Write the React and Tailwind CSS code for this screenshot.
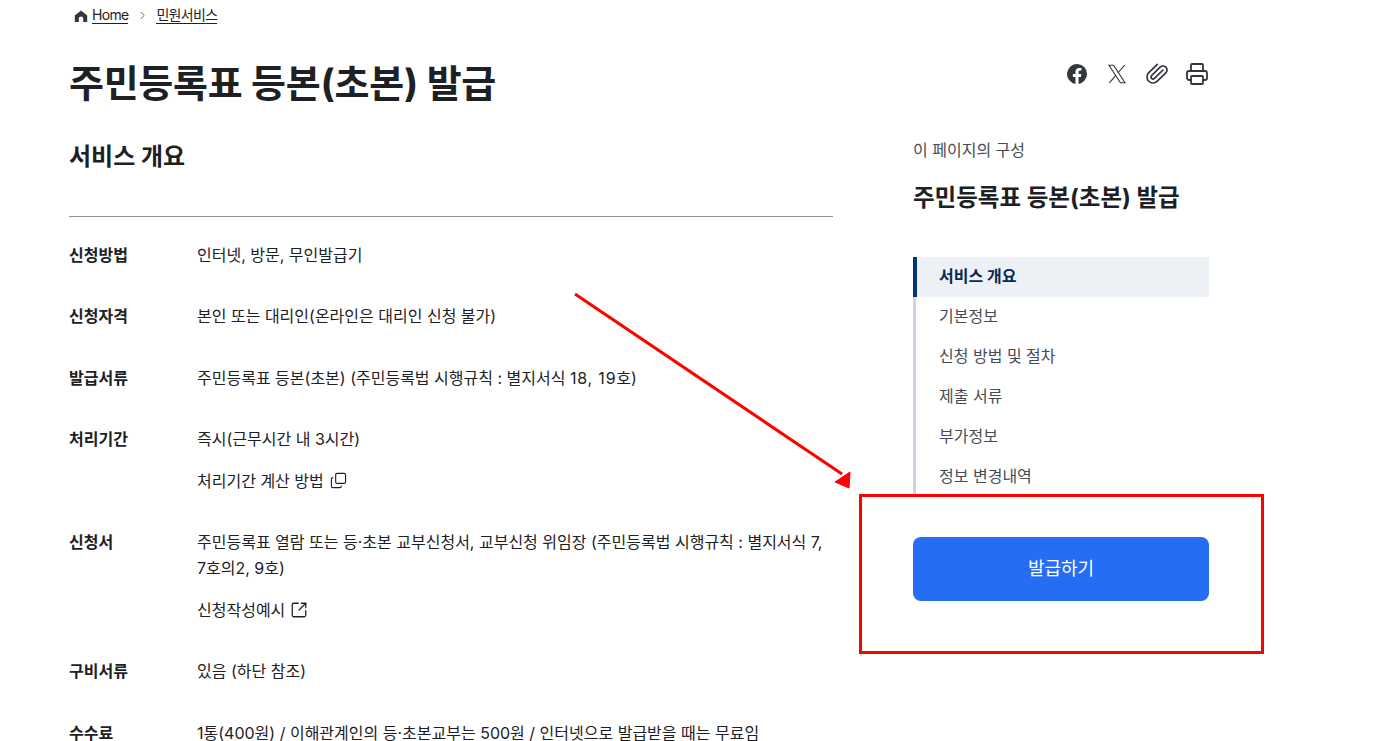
import { ChevronRight, Paperclip, Printer, Copy, SquareArrowOutUpRight } from 'lucide-react';

const FONT = "font-['Inter','Noto_Sans_CJK_KR',sans-serif]";

function Row({ label, children }) {
  return (
    <div className="flex">
      <div className="w-[128px] shrink-0 text-[16px] leading-[26px] font-bold text-[#1e2124]">{label}</div>
      <div className="min-w-0 flex-1 text-[16px] leading-[26px] text-[#1e2124]">{children}</div>
    </div>
  );
}

const navItems = ['기본정보', '신청 방법 및 절차', '제출 서류', '부가정보', '정보 변경내역'];

export default function App() {
  return (
    <div className={`relative h-[741px] overflow-hidden bg-white ${FONT}`}>
      <div className="ml-[69px] w-[1140px]">
        <nav className="flex h-[31px] items-center pl-[5px] pb-[1px] text-[14px] tracking-[-0.7px] text-[#1e2124]">
          <svg width="14" height="14" viewBox="0 0 14 14" fill="#33363d" className="mr-[4px] mt-[2px]">
            <path d="M7 1.6L13.2 6.4V13H9.2V9.6a2.2 2.2 0 0 0-4.4 0V13H.8V6.4L7 1.6Z" />
          </svg>
          <span className="border-b border-[#1e2124] leading-[17px]">Home</span>
          <ChevronRight size={13} strokeWidth={1.5} className="ml-[8px] mr-[7px] text-[#464c53]" />
          <span className="border-b border-[#1e2124] leading-[17px]">민원서비스</span>
        </nav>

        <div className="flex items-start justify-between pt-[28px]">
          <h1 className="text-[38px] leading-[48px] font-bold tracking-[-0.28px] text-[#1e2124]">주민등록표 등본(초본) 발급</h1>
          <div className="flex items-center gap-[16px] pt-[3px]">
            <svg width="24" height="24" viewBox="0 0 24 24" fill="#33363d">
              <path d="M22 12a10 10 0 1 0-11.56 9.88v-6.99H7.9V12h2.54V9.8c0-2.5 1.49-3.89 3.78-3.89 1.09 0 2.24.2 2.24.2v2.46h-1.26c-1.24 0-1.63.77-1.63 1.56V12h2.78l-.45 2.89h-2.33v6.99A10 10 0 0 0 22 12Z" />
            </svg>
            <svg width="24" height="24" viewBox="0 0 24 24" fill="none" stroke="#33363d" strokeWidth="1.1">
              <path d="M4 3.2h4.6l11.4 17.6h-4.6L4 3.2Z" />
              <path d="M19.6 3.2l-6.8 7.8M11 13.2l-6.6 7.6" />
            </svg>
            <Paperclip size={24} strokeWidth={1.7} className="scale-x-[-1] rotate-[90deg] text-[#33363d]" />
            <Printer size={24} strokeWidth={1.8} className="text-[#33363d]" />
          </div>
        </div>

        <div className="flex justify-between">
          <main className="w-[764px]">
            <h2 className="mt-[32px] text-[24px] leading-[36px] font-bold text-[#1e2124]">서비스 개요</h2>
            <div className="mt-[41px] border-t border-[#8f8f8f]" />
            <div className="mt-[25px] flex flex-col gap-[35.3px]">
              <Row label="신청방법">인터넷, 방문, 무인발급기</Row>
              <Row label="신청자격">본인 또는 대리인(온라인은 대리인 신청 불가)</Row>
              <Row label="발급서류">
                주민등록표 등본(초본) (주민등록법 시행규칙 : 별지서식 <span className="tracking-[0.8px]">18, 19</span>호)
              </Row>
              <Row label="처리기간">
                <div>즉시(근무시간 내 3시간)</div>
                <div className="mt-[16px] flex items-center gap-[6px]">
                  처리기간 계산 방법
                  <Copy size={17} strokeWidth={1.6} className="scale-x-[-1] rotate-[180deg]" />
                </div>
              </Row>
              <Row label="신청서">
                <div>주민등록표 열람 또는 등·초본 교부신청서, 교부신청 위임장 (주민등록법 시행규칙 : 별지서식 7, 7호의2, 9호)</div>
                <div className="mt-[16px] flex items-center gap-[5px]">
                  신청작성예시
                  <SquareArrowOutUpRight size={18} strokeWidth={1.7} />
                </div>
              </Row>
              <Row label="구비서류">있음 (하단 참조)</Row>
              <Row label="수수료">1통(400원) / 이해관계인의 등·초본교부는 500원 / 인터넷으로 발급받을 때는 무료임</Row>
            </div>
          </main>

          <aside className="w-[296px]">
            <p className="mt-[30px] text-[16px] leading-[26px] text-[#464c53]">이 페이지의 구성</p>
            <p className="mt-[19px] text-[23.5px] leading-[32px] font-bold text-[#1e2124]">주민등록표 등본(초본) 발급</p>
            <ul className="mt-[43px] border-l-[3px] border-[#ccd6e3]">
              <li className="-ml-[3px] flex h-[40px] items-center border-l-[4px] border-[#003675] bg-[#edf0f5] pb-[2px] pl-[22px] text-[16px] font-bold text-[#052b57]">
                서비스 개요
              </li>
              {navItems.map((item) => (
                <li key={item} className="flex h-[40px] items-center pb-[2px] pl-[23px] text-[16px] text-[#464c53]">
                  {item}
                </li>
              ))}
            </ul>
            <button
              type="button"
              className="mt-[40px] h-[64px] w-full rounded-[8px] bg-[#256ef4] pb-[2px] text-[18px] text-white"
            >
              발급하기
            </button>
          </aside>
        </div>
      </div>

      {/* 빨간 표시 */}
      <div className="absolute left-[859px] top-[494px] h-[160px] w-[405px] border-[3px] border-[#ff0000]" />
      <svg className="absolute left-0 top-0" width="1379" height="741" fill="none">
        <path d="M575 294L842 474" stroke="#ff0000" strokeWidth="3" />
        <path d="M849 488L835 482L850 472Z" fill="#ff0000" stroke="#ff0000" strokeWidth="1" />
      </svg>
    </div>
  );
}
